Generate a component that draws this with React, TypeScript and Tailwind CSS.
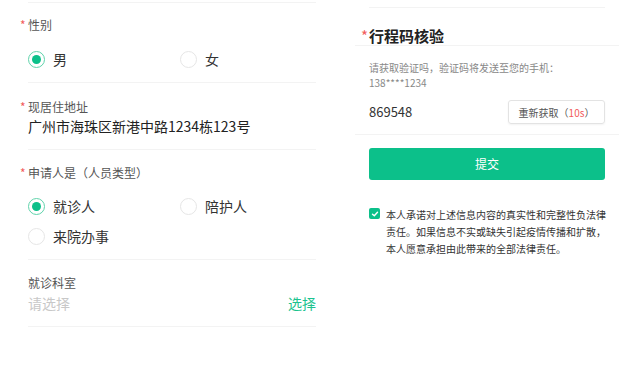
import React from "react";

type RadioProps = {
  label: string;
  checked?: boolean;
};

function Radio({ label, checked }: RadioProps) {
  return (
    <div className="flex items-center h-[16px]">
      <div
        className={`w-[17px] h-[17px] rounded-full flex items-center justify-center border-[1.5px] ${
          checked ? "border-[#5fd3ab]" : "border-[#e6e6e6]"
        }`}
      >
        {checked && <div className="w-[9px] h-[9px] rounded-full bg-[#0cc08a]" />}
      </div>
      <span className="ml-[8px] text-[14px] leading-[20px] text-[#333]">{label}</span>
    </div>
  );
}

function Label({ text, required }: { text: string; required?: boolean }) {
  return (
    <div className="flex items-center -ml-[8px] text-[12px] leading-[17px] text-[#555]">
      <span className="w-[8px] text-[#f25c5c]">{required ? "*" : ""}</span>
      <span>{text}</span>
    </div>
  );
}

const Divider = () => <div className="h-px bg-[#f3f3f3]" />;

export default function App() {
  return (
    <div className="w-[634px] h-[365px] bg-white flex font-['Noto_Sans_CJK_SC','Noto_Sans',sans-serif] overflow-hidden">
      {/* Left form */}
      <div className="w-[288px] ml-[28px] pt-[2px] flex flex-col">
        <Divider />
        <div className="mt-[13px]">
          <Label text="性别" required />
        </div>
        <div className="mt-[18px] flex">
          <div className="w-[152px]">
            <Radio label="男" checked />
          </div>
          <Radio label="女" />
        </div>
        <div className="mt-[15px]">
          <Divider />
        </div>

        <div className="mt-[15px]">
          <Label text="现居住地址" required />
        </div>
        <div className="mt-[1px] text-[14px] leading-[20px] text-[#222]">
          广州市海珠区新港中路1234栋123号
        </div>
        <div className="mt-[13px]">
          <Divider />
        </div>

        <div className="mt-[14px]">
          <Label text="申请人是（人员类型）" required />
        </div>
        <div className="mt-[17px] flex">
          <div className="w-[152px]">
            <Radio label="就诊人" checked />
          </div>
          <Radio label="陪护人" />
        </div>
        <div className="mt-[14px]">
          <Radio label="来院办事" />
        </div>
        <div className="mt-[15px]">
          <Divider />
        </div>

        <div className="mt-[14px] text-[12px] leading-[17px] text-[#555]">就诊科室</div>
        <div className="mt-[2px] flex items-center justify-between text-[14px] leading-[20px]">
          <span className="text-[#c8c8c8]">请选择</span>
          <span className="text-[#1cc38f]">选择</span>
        </div>
        <div className="mt-[13px]">
          <Divider />
        </div>
      </div>

      {/* Right form */}
      <div className="ml-[39px] w-[264px] flex flex-col">
        <div className="px-[14px] pt-[7px]">
          <Divider />
        </div>
        <div className="px-[14px] mt-[19px]">
          <div className="flex items-center -ml-[8px] text-[15px] leading-[18px] font-semibold text-[#222]">
            <span className="w-[8px] text-[#f25c5c] font-normal">*</span>
            <span>行程码核验</span>
          </div>
        </div>
        <Divider />
        <div className="px-[14px] mt-[14px] text-[10px] leading-[15px] text-[#888]">
          <div>请获取验证吗，验证码将发送至您的手机：</div>
          <div>138****1234</div>
        </div>
        <div className="px-[14px] mt-[10px] flex items-center justify-between h-[24px]">
          <span className="text-[13px] text-[#333]">869548</span>
          <div className="w-[97px] h-[24px] rounded-[3px] border border-[#e3e3e3] shadow-[0_1px_2px_rgba(0,0,0,0.05)] flex items-center justify-center text-[10px] text-[#555]">
            重新获取（<span className="text-[#f25c5c]">10s</span>）
          </div>
        </div>
        <div className="mt-[10px]">
          <Divider />
        </div>
        <div className="px-[14px] mt-[13px]">
          <div className="h-[32px] rounded-[3px] bg-[#0cc08a] flex items-center justify-center text-[12px] text-white">
            提交
          </div>
        </div>
        <div className="px-[14px] mt-[26px] flex">
          <div className="mt-[2px] w-[11px] h-[11px] rounded-[2px] bg-[#0cc08a] flex items-center justify-center shrink-0">
            <svg width="8" height="8" viewBox="0 0 8 8" fill="none">
              <path d="M1.5 4.2 L3.3 5.8 L6.5 2.2" stroke="white" strokeWidth="1.4" strokeLinecap="round" strokeLinejoin="round" />
            </svg>
          </div>
          <div className="ml-[6px] text-[10px] leading-[17px] text-[#333] whitespace-nowrap">
            <div>本人承诺对上述信息内容的真实性和完整性负法律</div>
            <div>责任。如果信息不实或缺失引起疫情传播和扩散，</div>
            <div>本人愿意承担由此带来的全部法律责任。</div>
          </div>
        </div>
      </div>
    </div>
  );
}
